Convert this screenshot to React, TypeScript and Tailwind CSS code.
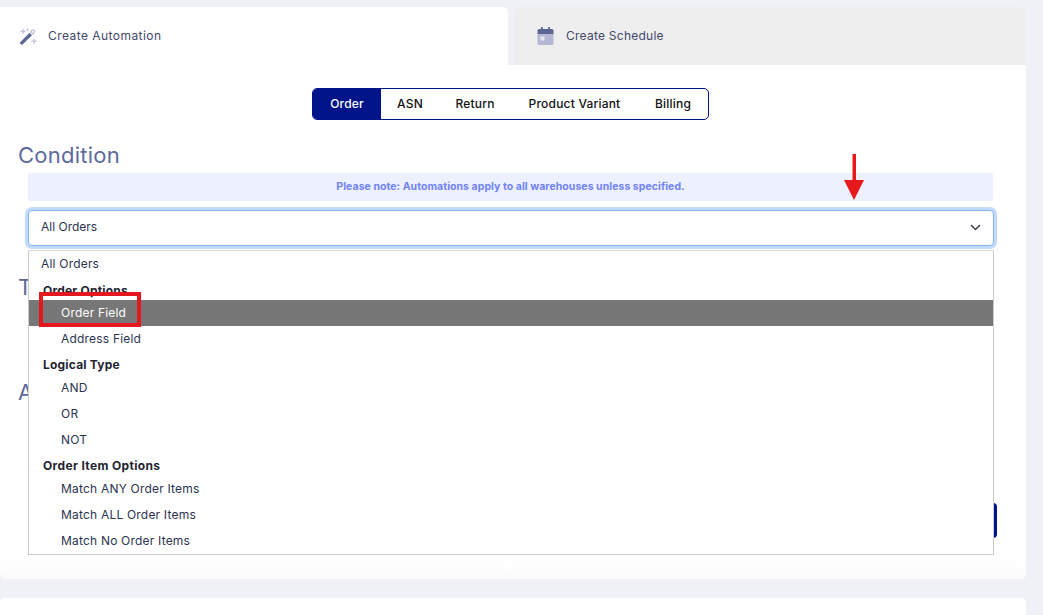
const font = "font-['Inter','Liberation_Sans',sans-serif]";

function Option({ label, active }: { label: string; active?: boolean }) {
  return (
    <div className={`h-[26px] flex items-center pl-[32px] text-[12px] tracking-[0.2px] ${active ? "bg-[#777777] text-white" : "text-[#2b3350]"}`}>
      {label}
    </div>
  );
}

function Group({ label, wide, low }: { label: string; wide?: boolean; low?: boolean }) {
  return (
    <div className={`h-[23px] flex items-end pl-[14px] text-[12px] font-bold text-[#1f2430] ${low ? "" : "pb-[1px]"} ${wide ? "tracking-[0.35px]" : "tracking-[0.2px]"}`}>
      {label}
    </div>
  );
}

function Wand() {
  return (
    <svg width="20" height="17" viewBox="0 0 20 17" fill="none">
      <path d="M2 14.5 L11.5 4.8 L14 7.2 L4.6 16.5 Q3.8 17 3 16.3 L2 15.4 Q1.6 15 2 14.5Z" fill="#5d6796" />
      <path d="M12.5 3.8 L14 2.2 Q15 1.4 15.9 2.2 L16.4 2.8 Q17 3.6 16.3 4.4 L15 5.9Z" fill="none" stroke="#b9bdd4" strokeWidth="1.2" />
      <path d="M5 1v5M2.500 3.500h5" stroke="#c0c4d8" strokeWidth="1.300" />
      <path d="M9.500 0.500v2.600M8.200 1.800h2.600" stroke="#c0c4d8" strokeWidth="1" />
      <path d="M16 10.500v5.500M13.300 13.200h5.400" stroke="#c0c4d8" strokeWidth="1.300" />
    </svg>
  );
}

function Calendar() {
  return (
    <svg width="17" height="18" viewBox="0 0 16 18" fill="none">
      <rect x="0" y="6" width="16" height="12" rx="1.500" fill="#b4b8d2" />
      <path d="M0 7V3.500Q0 2 1.500 2H14.500Q16 2 16 3.500V7Z" fill="#5d6796" />
      <rect x="3.500" y="0" width="1.800" height="3.500" fill="#5d6796" />
      <rect x="10.700" y="0" width="1.800" height="3.500" fill="#5d6796" />
      <rect x="3" y="9.500" width="4" height="4" fill="#e6e7f0" />
    </svg>
  );
}

export default function App() {
  return (
    <div className={`${font} w-[1043px] h-[615px] overflow-hidden bg-[#f0f1f7] pt-[7px]`}>
      <div className="w-[1026px]">
        <div className="flex h-[58px] gap-[6px]">
          <div className="w-[508px] bg-white rounded-tr-[5px] flex items-center pl-[18px] gap-[10px]">
            <Wand />
            <span className="text-[12px] text-[#43486a] tracking-[0.45px]">Create Automation</span>
          </div>
          <div className="flex-1 bg-[#eeeeee] rounded-t-[5px] flex items-center pl-[23px] gap-[12px]">
            <Calendar />
            <span className="text-[12px] text-[#43486a] tracking-[0.25px]">Create Schedule</span>
          </div>
        </div>

        <div className="relative h-[514px] rounded-b-[5px] pt-[23px] bg-gradient-to-b from-white from-[96%] to-[#fbfbfb]">
          <div className="flex pl-[312px]">
            <div className="flex w-[397px] h-[32px] border border-[#00148a] rounded-[5px] text-[12px] font-medium tracking-[0.2px] text-[#111111] overflow-hidden">
              <div className="w-[68px] bg-[#00148a] text-white flex items-center justify-center">Order</div>
              <div className="w-[58px] flex items-center justify-center">ASN</div>
              <div className="w-[72px] flex items-center justify-center">Return</div>
              <div className="w-[127px] flex items-center justify-center">Product Variant</div>
              <div className="flex-1 flex items-center justify-center">Billing</div>
            </div>
          </div>

          <div className="pl-[18px] pt-[21px] text-[22px] leading-[28px] tracking-[0.25px] text-[#5d6a9c]">Condition</div>

          <div className="ml-[28px] mr-[33px] mt-[4px] h-[28px] bg-[#edf0fe] rounded-[2px] flex items-center justify-center text-[10.500px] tracking-[0.05px] font-bold text-[#7083f5]">
            Please note: Automations apply to all warehouses unless specified.
          </div>

          <div className="ml-[28px] mr-[32px] mt-[9px] h-[36px] bg-white border border-[#86b4f5] rounded-[4px] shadow-[0_0_0_3px_#c2dbfd] flex items-center justify-between pl-[12px] pr-[12px] text-[12px] text-[#2b3350]">
            <span className="pb-[2px]">All Orders</span>
            <svg className="mb-[1px]" width="11" height="7" viewBox="0 0 11 7" fill="none">
              <path d="M1 1l4.500 4.500L10 1" stroke="#3a3f4a" strokeWidth="1.500" />
            </svg>
          </div>

          <div className="pl-[18px] pt-[27px] text-[22px] leading-[28px] text-[#5d6a9c]">Trigger</div>
          <div className="pl-[18px] pt-[77px] text-[22px] leading-[28px] text-[#5d6a9c]">Action</div>

          <div className="absolute right-[29px] top-[438px] w-[100px] h-[35px] bg-[#00148a] rounded-[4px]" />

          <div className="absolute left-[28px] top-[185px] w-[966px] h-[305px] bg-white border border-[#cccccc] border-t-[#dddddd]">
            <div className="h-[26px] flex items-center pl-[12px] text-[12px] tracking-[0.2px] text-[#2b3350]">All Orders</div>
            <Group label="Order Options" low />
            <Option label="Order Field" active />
            <Option label="Address Field" />
            <Group label="Logical Type" />
            <Option label="AND" />
            <Option label="OR" />
            <Option label="NOT" />
            <Group label="Order Item Options" wide />
            <Option label="Match ANY Order Items" />
            <Option label="Match ALL Order Items" />
            <Option label="Match No Order Items" />
          </div>

          <div className="absolute left-[39px] top-[227px] w-[102px] h-[35px] border-[4px] border-[#e3191f]" />
          <svg className="absolute left-[844px] top-[89px]" width="20" height="47" viewBox="0 0 20 47">
            <rect x="8.500" y="0" width="3.500" height="27" fill="#e8191c" />
            <path d="M0 26H20L10 46Z" fill="#e8191c" />
          </svg>
        </div>

        <div className="mt-[19px] h-[40px] bg-white rounded-t-[5px]" />
      </div>
    </div>
  );
}
